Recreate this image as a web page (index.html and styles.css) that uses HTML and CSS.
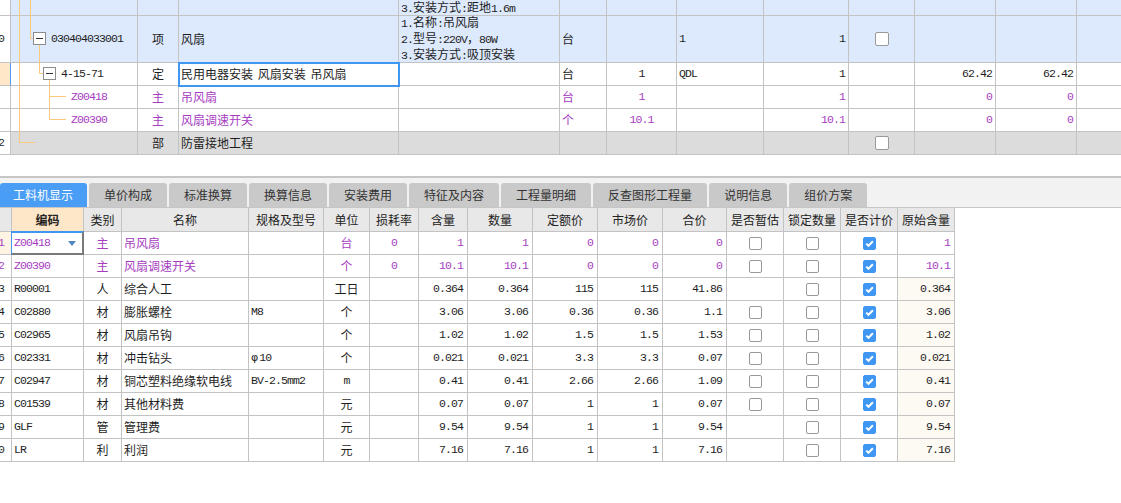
FILE: index.html
```html
<!DOCTYPE html>
<html lang="zh-CN">
<head>
<meta charset="utf-8">
<title>工料机显示</title>
<link rel="stylesheet" href="styles.css">
</head>
<body>
<section class="tree-wrap">
  <svg class="tree-lines" width="137" height="155" viewBox="0 0 137 155">
    <g fill="none" stroke="#ffc97c" stroke-width="1">
      <path d="M19.5 0 V142.5 H35"/>
      <path d="M30.5 0 V38.5 H33"/>
      <path d="M39.5 45 V73.5 H43"/>
      <path d="M49.5 80 V119.5 H66 M49.5 96.5 H66"/>
    </g>
    <g fill="#fff" stroke="#8c8c8c" stroke-width="1">
      <rect x="33.5" y="32.5" width="12" height="12"/>
      <rect x="43.5" y="67.5" width="12" height="12"/>
    </g>
    <g stroke="#333" stroke-width="1">
      <path d="M36 38.5 H43"/>
      <path d="M46 73.5 H53"/>
    </g>
  </svg>
  <div class="grid top-grid">
    <div class="row blue">
      <div class="rn"></div><div></div><div></div><div></div>
      <div class="feat"><span><span class="a">3.</span>安装方式<span class="a">:</span>距地<span class="a">1.6m</span></span></div>
      <div></div><div></div><div></div><div></div><div></div><div></div><div></div><div></div>
    </div>
    <div class="row blue">
      <div class="rn m">10</div>
      <div class="m lv1">030404033001</div>
      <div class="c">项</div>
      <div>风扇</div>
      <div class="feat">
        <span><span class="a">1.</span>名称<span class="a">:</span>吊风扇</span>
        <span><span class="a">2.</span>型号<span class="a">:220V</span>，<span class="a">80W</span></span>
        <span><span class="a">3.</span>安装方式<span class="a">:</span>吸顶安装</span>
      </div>
      <div>台</div>
      <div></div>
      <div class="m">1</div>
      <div class="m r">1</div>
      <div class="c"><span class="cb big"></span></div>
      <div></div><div></div><div></div>
    </div>
    <div class="row">
      <div class="rn cur"></div>
      <div class="m lv2">4-15-71</div>
      <div class="c">定</div>
      <div class="sel">民用电器安装 风扇安装 吊风扇</div>
      <div></div>
      <div>台</div>
      <div class="m c">1</div>
      <div class="m">QDL</div>
      <div class="m r">1</div>
      <div></div>
      <div class="m r">62.42</div>
      <div class="m r">62.42</div>
      <div></div>
    </div>
    <div class="row p">
      <div class="rn"></div>
      <div class="m lv3">Z00418</div>
      <div class="c">主</div>
      <div>吊风扇</div>
      <div></div>
      <div>台</div>
      <div class="m c">1</div>
      <div></div>
      <div class="m r">1</div>
      <div></div>
      <div class="m r">0</div>
      <div class="m r">0</div>
      <div></div>
    </div>
    <div class="row p">
      <div class="rn"></div>
      <div class="m lv3">Z00390</div>
      <div class="c">主</div>
      <div>风扇调速开关</div>
      <div></div>
      <div>个</div>
      <div class="m c">10.1</div>
      <div></div>
      <div class="m r">10.1</div>
      <div></div>
      <div class="m r">0</div>
      <div class="m r">0</div>
      <div></div>
    </div>
    <div class="row gray">
      <div class="rn m">2</div>
      <div></div>
      <div class="c">部</div>
      <div>防雷接地工程</div>
      <div></div><div></div><div></div><div></div><div></div>
      <div class="c"><span class="cb big"></span></div>
      <div></div><div></div><div></div>
    </div>
  </div>
</section>

<nav class="tabbar">
  <span class="tab active">工料机显示</span>
  <span class="tab">单价构成</span>
  <span class="tab">标准换算</span>
  <span class="tab">换算信息</span>
  <span class="tab">安装费用</span>
  <span class="tab">特征及内容</span>
  <span class="tab">工程量明细</span>
  <span class="tab">反查图形工程量</span>
  <span class="tab">说明信息</span>
  <span class="tab">组价方案</span>
</nav>

<section class="grid bottom-grid">
  <div class="row head">
    <div></div>
    <div class="hsel">编码</div>
    <div>类别</div>
    <div>名称</div>
    <div>规格及型号</div>
    <div>单位</div>
    <div>损耗率</div>
    <div>含量</div>
    <div>数量</div>
    <div>定额价</div>
    <div>市场价</div>
    <div>合价</div>
    <div>是否暂估</div>
    <div>锁定数量</div>
    <div>是否计价</div>
    <div>原始含量</div>
  </div>
  <div class="row p">
    <div class="rn m cur2">1</div>
    <div class="m sel2">Z00418<span class="drop"></span></div>
    <div class="c">主</div>
    <div>吊风扇</div>
    <div></div>
    <div class="c">台</div>
    <div class="m c">0</div>
    <div class="m r">1</div>
    <div class="m r">1</div>
    <div class="m r">0</div>
    <div class="m r">0</div>
    <div class="m r">0</div>
    <div class="c"><span class="cb"></span></div>
    <div class="c"><span class="cb"></span></div>
    <div class="c"><span class="cb on"><svg viewBox="0 0 11 11" width="11" height="11"><path d="M2.2 5.6 L4.5 7.8 L8.9 3.3" fill="none" stroke="#fff" stroke-width="2"/></svg></span></div>
    <div class="m r">1</div>
  </div>
  <div class="row p">
    <div class="rn m">2</div>
    <div class="m">Z00390</div>
    <div class="c">主</div>
    <div>风扇调速开关</div>
    <div></div>
    <div class="c">个</div>
    <div class="m c">0</div>
    <div class="m r">10.1</div>
    <div class="m r">10.1</div>
    <div class="m r">0</div>
    <div class="m r">0</div>
    <div class="m r">0</div>
    <div class="c"><span class="cb"></span></div>
    <div class="c"><span class="cb"></span></div>
    <div class="c"><span class="cb on"><svg viewBox="0 0 11 11" width="11" height="11"><path d="M2.2 5.6 L4.5 7.8 L8.9 3.3" fill="none" stroke="#fff" stroke-width="2"/></svg></span></div>
    <div class="m r">10.1</div>
  </div>
  <div class="row">
    <div class="rn m">3</div>
    <div class="m">R00001</div>
    <div class="c">人</div>
    <div>综合人工</div>
    <div></div>
    <div class="c">工日</div>
    <div></div>
    <div class="m r">0.364</div>
    <div class="m r">0.364</div>
    <div class="m r">115</div>
    <div class="m r">115</div>
    <div class="m r">41.86</div>
    <div></div>
    <div class="c"><span class="cb"></span></div>
    <div class="c"><span class="cb on"><svg viewBox="0 0 11 11" width="11" height="11"><path d="M2.2 5.6 L4.5 7.8 L8.9 3.3" fill="none" stroke="#fff" stroke-width="2"/></svg></span></div>
    <div class="m r orig">0.364</div>
  </div>
  <div class="row">
    <div class="rn m">4</div>
    <div class="m">C02880</div>
    <div class="c">材</div>
    <div>膨胀螺栓</div>
    <div class="m">M8</div>
    <div class="c">个</div>
    <div></div>
    <div class="m r">3.06</div>
    <div class="m r">3.06</div>
    <div class="m r">0.36</div>
    <div class="m r">0.36</div>
    <div class="m r">1.1</div>
    <div class="c"><span class="cb"></span></div>
    <div class="c"><span class="cb"></span></div>
    <div class="c"><span class="cb on"><svg viewBox="0 0 11 11" width="11" height="11"><path d="M2.2 5.6 L4.5 7.8 L8.9 3.3" fill="none" stroke="#fff" stroke-width="2"/></svg></span></div>
    <div class="m r orig">3.06</div>
  </div>
  <div class="row">
    <div class="rn m">5</div>
    <div class="m">C02965</div>
    <div class="c">材</div>
    <div>风扇吊钩</div>
    <div></div>
    <div class="c">个</div>
    <div></div>
    <div class="m r">1.02</div>
    <div class="m r">1.02</div>
    <div class="m r">1.5</div>
    <div class="m r">1.5</div>
    <div class="m r">1.53</div>
    <div class="c"><span class="cb"></span></div>
    <div class="c"><span class="cb"></span></div>
    <div class="c"><span class="cb on"><svg viewBox="0 0 11 11" width="11" height="11"><path d="M2.2 5.6 L4.5 7.8 L8.9 3.3" fill="none" stroke="#fff" stroke-width="2"/></svg></span></div>
    <div class="m r orig">1.02</div>
  </div>
  <div class="row">
    <div class="rn m">6</div>
    <div class="m">C02331</div>
    <div class="c">材</div>
    <div>冲击钻头</div>
    <div><span class="phi">φ</span><span class="a">10</span></div>
    <div class="c">个</div>
    <div></div>
    <div class="m r">0.021</div>
    <div class="m r">0.021</div>
    <div class="m r">3.3</div>
    <div class="m r">3.3</div>
    <div class="m r">0.07</div>
    <div class="c"><span class="cb"></span></div>
    <div class="c"><span class="cb"></span></div>
    <div class="c"><span class="cb on"><svg viewBox="0 0 11 11" width="11" height="11"><path d="M2.2 5.6 L4.5 7.8 L8.9 3.3" fill="none" stroke="#fff" stroke-width="2"/></svg></span></div>
    <div class="m r orig">0.021</div>
  </div>
  <div class="row">
    <div class="rn m">7</div>
    <div class="m">C02947</div>
    <div class="c">材</div>
    <div>铜芯塑料绝缘软电线</div>
    <div class="m">BV-2.5mm2</div>
    <div class="m c">m</div>
    <div></div>
    <div class="m r">0.41</div>
    <div class="m r">0.41</div>
    <div class="m r">2.66</div>
    <div class="m r">2.66</div>
    <div class="m r">1.09</div>
    <div class="c"><span class="cb"></span></div>
    <div class="c"><span class="cb"></span></div>
    <div class="c"><span class="cb on"><svg viewBox="0 0 11 11" width="11" height="11"><path d="M2.2 5.6 L4.5 7.8 L8.9 3.3" fill="none" stroke="#fff" stroke-width="2"/></svg></span></div>
    <div class="m r orig">0.41</div>
  </div>
  <div class="row">
    <div class="rn m">8</div>
    <div class="m">C01539</div>
    <div class="c">材</div>
    <div>其他材料费</div>
    <div></div>
    <div class="c">元</div>
    <div></div>
    <div class="m r">0.07</div>
    <div class="m r">0.07</div>
    <div class="m r">1</div>
    <div class="m r">1</div>
    <div class="m r">0.07</div>
    <div class="c"><span class="cb"></span></div>
    <div class="c"><span class="cb"></span></div>
    <div class="c"><span class="cb on"><svg viewBox="0 0 11 11" width="11" height="11"><path d="M2.2 5.6 L4.5 7.8 L8.9 3.3" fill="none" stroke="#fff" stroke-width="2"/></svg></span></div>
    <div class="m r orig">0.07</div>
  </div>
  <div class="row">
    <div class="rn m">9</div>
    <div class="m">GLF</div>
    <div class="c">管</div>
    <div>管理费</div>
    <div></div>
    <div class="c">元</div>
    <div></div>
    <div class="m r">9.54</div>
    <div class="m r">9.54</div>
    <div class="m r">1</div>
    <div class="m r">1</div>
    <div class="m r">9.54</div>
    <div></div>
    <div class="c"><span class="cb"></span></div>
    <div class="c"><span class="cb on"><svg viewBox="0 0 11 11" width="11" height="11"><path d="M2.2 5.6 L4.5 7.8 L8.9 3.3" fill="none" stroke="#fff" stroke-width="2"/></svg></span></div>
    <div class="m r orig">9.54</div>
  </div>
  <div class="row">
    <div class="rn m">10</div>
    <div class="m">LR</div>
    <div class="c">利</div>
    <div>利润</div>
    <div></div>
    <div class="c">元</div>
    <div></div>
    <div class="m r">7.16</div>
    <div class="m r">7.16</div>
    <div class="m r">1</div>
    <div class="m r">1</div>
    <div class="m r">7.16</div>
    <div></div>
    <div class="c"><span class="cb"></span></div>
    <div class="c"><span class="cb on"><svg viewBox="0 0 11 11" width="11" height="11"><path d="M2.2 5.6 L4.5 7.8 L8.9 3.3" fill="none" stroke="#fff" stroke-width="2"/></svg></span></div>
    <div class="m r orig">7.16</div>
  </div>
</section>
</body>
</html>
```

FILE: styles.css
```css
* { box-sizing: border-box; margin: 0; padding: 0; }

html, body {
  width: 1121px;
  height: 503px;
  overflow: hidden;
  background: #fff;
}

body {
  font-family: "Noto Sans CJK SC", "Microsoft YaHei", sans-serif;
  font-size: 12px;
  color: #1e1e1e;
}

/* ---------- generic grid ---------- */
.grid { display: grid; }
.row { display: contents; }

.grid > .row > div {
  display: flex;
  align-items: center;
  padding: 0 3px 0 2px;
  border-right: 1px solid #c3c3c3;
  border-bottom: 1px solid #c3c3c3;
  white-space: nowrap;
  overflow: hidden;
  min-width: 0;
  line-height: 14px;
  background: #fff;
}

.grid > .row > div.c { justify-content: center; padding: 0; }
.grid > .row > div.r { justify-content: flex-end; padding-right: 3px; }

.m, .a {
  font-family: "Liberation Mono", "DejaVu Sans Mono", monospace;
  font-size: 11.5px;
  letter-spacing: -0.9px;
  color: inherit;
}

.phi { font-family: "DejaVu Sans", sans-serif; font-size: 11px; margin-right: 1px; }

.grid > .row > div.rn {
  justify-content: flex-end;
  padding: 0 6px 0 0;
  background: #fff;
}

/* ---------- top tree grid ---------- */
.tree-wrap {
  position: relative;
  width: 1121px;
  overflow: hidden;
}

.tree-lines {
  position: absolute;
  left: 0;
  top: 0;
  z-index: 2;
  pointer-events: none;
}

.top-grid {
  width: 1137px;
  grid-template-columns: 11px 127px 41px 220px 161px 47px 70px 87px 85px 66px 81px 81px 60px;
  grid-template-rows: 16px 47px 23px 23px 23px 23px;
}

.row.blue > div { background: #dde9fc; }
.row.gray > div { background: #dcdcdc; }
.grid > .row.blue > div.rn,
.grid > .row.gray > div.rn { background: #fff; }

.grid > .row > div.cur {
  background: #ffe7c7;
  border-right-color: #4b9cf0;
}

.grid > .row > div.lv1 { padding-left: 40px; }
.grid > .row > div.lv2 { padding-left: 50px; }
.grid > .row > div.lv3 { padding-left: 60px; }

.grid > .row > div.feat {
  flex-direction: column;
  align-items: flex-start;
  justify-content: center;
}

.grid > .row > div.sel {
  outline: 2px solid #3f97f1;
  outline-offset: -1px;
  position: relative;
  z-index: 1;
  word-spacing: 2px;
}

.row.p > div { color: #a63dbf; }

.cb {
  display: block;
  width: 13px;
  height: 13px;
  border: 1px solid #999;
  border-radius: 2px;
  background: #fff;
}
.cb.big { width: 14px; height: 14px; }
.cb.on {
  background: #3f97f3;
  border-color: #3f97f3;
  display: flex;
  align-items: center;
  justify-content: center;
}
.cb.on svg { display: block; }

/* ---------- tab bar ---------- */
.tabbar {
  margin-top: 21px;
  height: 32px;
  border-top: 2px solid #c6c6c6;
  border-bottom: 1px solid #c6c6c6;
  background: #f2f2f2;
  padding-top: 5px;
  display: flex;
  align-items: flex-end;
  gap: 2px;
}

.tab {
  height: 24px;
  line-height: 24px;
  padding: 0 15px;
  background: #c9c9c9;
  color: #333;
  border-radius: 3px 3px 0 0;
  white-space: nowrap;
}

.tab.active {
  background: #4a9df4;
  color: #fff;
  padding: 0 14px 0 13px;
}

/* ---------- bottom grid ---------- */
.bottom-grid {
  width: 955px;
  grid-template-columns: 12px 72px 38px 127px 75px 46px 49px 49px 65px 65px 65px 64px 57px 57px 57px 57px;
  grid-template-rows: 24px repeat(10, 23px);
}

.bottom-grid > .row > div.r { padding-right: 4px; }
.bottom-grid > .row > div.rn { padding-right: 7px; }

.row.head > div {
  background: #e8e8e8 !important;
  justify-content: center;
  padding: 0 !important;
  color: #222;
}

.row.head > div.hsel {
  background: #fee6c8 !important;
  font-weight: bold;
}

.grid > .row > div.cur2 { background: #fff3e3; }

.grid > .row > div.sel2 {
  position: relative;
  overflow: visible;
}
.sel2::after {
  content: "";
  position: absolute;
  left: -1px;
  top: -1px;
  right: -1px;
  bottom: -1px;
  border-top: 2px solid #3f97f1;
  border-left: 1px solid #3f97f1;
  border-right: 2px solid #7a7a7a;
  border-bottom: 2px solid #7a7a7a;
  pointer-events: none;
}

.drop {
  margin-left: auto;
  margin-right: 4px;
  width: 0;
  height: 0;
  border-left: 4px solid transparent;
  border-right: 4px solid transparent;
  border-top: 5px solid #4f86bd;
}

.grid > .row > div.orig { background: #fdf9f3; }
```
